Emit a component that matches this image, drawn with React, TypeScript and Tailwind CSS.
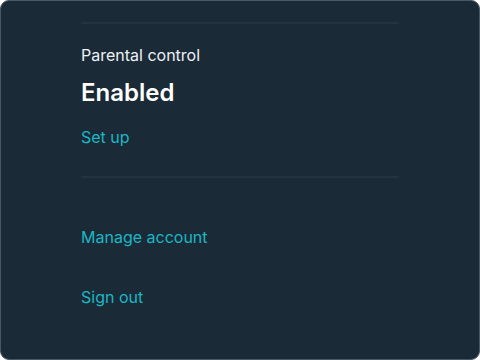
export default function App() {
  return (
    <div className="w-[480px] h-[360px] bg-white" style={{ fontFamily: "Inter, 'Noto Sans', sans-serif" }}>
      <div className="w-full h-full rounded-[9px] border border-[#4a5863] bg-[#1a2a37] px-[80px] pt-[21px]">
        <div className="h-[2px] bg-[#22333f]" />
        <div className="mt-[19px] text-[16px] leading-[24px] text-[#eef1f4]">Parental control</div>
        <div className="mt-[10px] text-[24px] leading-[32px] font-semibold text-white">Enabled</div>
        <a className="mt-[16px] block text-[16px] leading-[24px] text-[#1db6c4]" href="#">
          Set up
        </a>
        <div className="mt-[27px] h-[2px] bg-[#22333f]" />
        <a className="mt-[47px] block text-[16px] leading-[24px] text-[#1db6c4]" href="#">
          Manage account
        </a>
        <a className="mt-[36px] block text-[16px] leading-[24px] text-[#1db6c4]" href="#">
          Sign out
        </a>
      </div>
    </div>
  )
}
